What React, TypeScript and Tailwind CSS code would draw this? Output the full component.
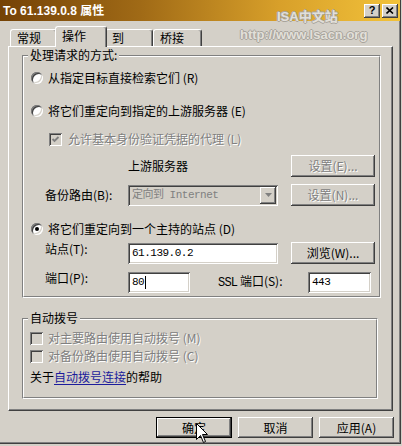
import React from "react";

const RAISED =
  "shadow-[inset_-1px_-1px_0_#404040,inset_1px_1px_0_#ffffff,inset_-2px_-2px_0_#808080,inset_2px_2px_0_#d4d0c8]";
const SUNKEN =
  "shadow-[inset_1px_1px_0_#808080,inset_-1px_-1px_0_#ffffff,inset_2px_2px_0_#404040,inset_-2px_-2px_0_#d4d0c8]";
const GRAY = "text-[#808080] [text-shadow:1px_1px_0_#ffffff]";
const MONO = "font-['Liberation_Mono','Noto_Sans_CJK_SC',monospace] text-[11px] tracking-[-0.5px]";

interface BtnProps {
  children: React.ReactNode;
  disabled?: boolean;
  primary?: boolean;
  size?: string;
}

const Btn: React.FC<BtnProps> = ({
  children,
  disabled = false,
  primary = false,
  size = "w-[84px] h-[22px]",
}) => (
  <div
    className={`flex shrink-0 items-center justify-center bg-[#d4d0c8] ${size} ${
      primary ? "border border-black" : ""
    } ${RAISED} ${disabled ? GRAY : "text-black"}`}
  >
    {children}
  </div>
);

const Radio: React.FC<{ checked?: boolean }> = ({ checked = false }) => (
  <span className="flex h-[12px] w-[12px] shrink-0 items-center justify-center rounded-full bg-white shadow-[inset_1px_1px_0_#808080,inset_-1px_-1px_0_#ffffff,inset_2px_2px_0_#404040,inset_-2px_-2px_0_#d4d0c8]">
    {checked && <span className="h-[4px] w-[4px] rounded-full bg-black" />}
  </span>
);

const Check: React.FC<{ checked?: boolean }> = ({ checked = false }) => (
  <span className={`flex h-[13px] w-[13px] shrink-0 items-center justify-center bg-[#d4d0c8] ${SUNKEN}`}>
    {checked && (
      <svg width="9" height="9" viewBox="0 0 9 9">
        <path d="M1.5 4 L3.5 6 L7.5 2" stroke="#808080" strokeWidth="1.8" fill="none" />
      </svg>
    )}
  </span>
);

interface GroupProps {
  title: string;
  size: string;
  children: React.ReactNode;
}

const Group: React.FC<GroupProps> = ({ title, size, children }) => (
  <div
    className={`relative shrink-0 border border-t-[#808080] border-l-[#808080] border-r-white border-b-white ${size}`}
  >
    <div className="flex h-full flex-col border border-t-white border-l-white border-r-[#808080] border-b-[#808080]">
      {children}
    </div>
    <span className="absolute left-[5px] top-[-8px] bg-[#d4d0c8] px-[2px] leading-[14px]">{title}</span>
  </div>
);

interface TabProps {
  label: string;
  size: string;
  active?: boolean;
}

const Tab: React.FC<TabProps> = ({ label, size, active = false }) => (
  <div
    className={`relative flex shrink-0 items-center rounded-t-[3px] border-l border-t border-r border-l-white border-t-white border-r-[#404040] bg-[#d4d0c8] pl-[6px] shadow-[inset_-1px_0_0_#808080] ${size} ${
      active ? "z-10 pb-[2px]" : "mb-[1px]"
    }`}
  >
    {label}
  </div>
);

const Field: React.FC<{ size: string; children?: React.ReactNode }> = ({ size, children }) => (
  <div className={`flex shrink-0 items-center bg-white pl-[4px] ${SUNKEN} ${size}`}>{children}</div>
);

const App: React.FC = () => {
  return (
    <div className="relative h-[446px] w-[402px] overflow-hidden bg-[#d4d0c8] font-['Noto_Sans_CJK_SC',sans-serif] text-[12px] leading-[14px] text-black">
      <div className="flex h-[444px] w-[401px] flex-col border-b border-r border-[#404040] shadow-[inset_-1px_-1px_0_#808080]">
        {/* title bar */}
        <div className="flex h-[21px] shrink-0 items-center bg-[linear-gradient(90deg,#744206_0%,#a06a16_35%,#d8a02a_70%,#f2c23a_100%)] pl-[3px] pr-[2px]">
          <span className="font-['Liberation_Sans','Noto_Sans_CJK_SC',sans-serif] text-[12px] font-bold text-white">
            To 61.139.0.8 属性
          </span>
          <div className="ml-auto flex gap-[2px]">
            <div className={`flex h-[14px] w-[16px] items-center justify-center bg-[#d4d0c8] ${RAISED}`}>
              <span className="font-['Liberation_Sans',sans-serif] text-[11px] font-bold leading-none">?</span>
            </div>
            <div className={`flex h-[14px] w-[16px] items-center justify-center bg-[#d4d0c8] ${RAISED}`}>
              <svg width="8" height="7" viewBox="0 0 8 7">
                <path d="M0.5 0.5 L7 6.5 M7 0.5 L0.5 6.5" stroke="#000" strokeWidth="1.6" />
              </svg>
            </div>
          </div>
        </div>

        {/* tabs */}
        <div className="relative z-10 mt-[5px] flex h-[21px] shrink-0 items-end pl-[10px]">
          <Tab label="常规" size="w-[47px] h-[17px]" />
          <Tab label="操作" size="w-[52px] h-[21px] -mx-[2px]" active />
          <Tab label="到" size="w-[48px] h-[17px]" />
          <Tab label="桥接" size="w-[49px] h-[17px]" />
        </div>

        {/* tab panel */}
        <div className="relative -mt-[1px] ml-[8px] flex h-[365px] w-[385px] shrink-0 flex-col border border-l-white border-t-white border-r-[#404040] border-b-[#404040] pl-[13px] pt-[8px] shadow-[inset_-1px_-1px_0_#808080]">
          <Group title="处理请求的方式:" size="w-[359px] h-[243px]">
            <div className="mt-[13px] flex h-[16px] items-center pl-[7px]">
              <Radio />
              <span className="ml-[5px]">从指定目标直接检索它们 (R)</span>
            </div>
            <div className="mt-[17px] flex h-[16px] items-center pl-[7px]">
              <Radio />
              <span className="ml-[5px]">将它们重定向到指定的上游服务器 (E)</span>
            </div>
            <div className="mt-[12px] flex h-[16px] items-center pl-[25px]">
              <Check checked />
              <span className={`ml-[6px] ${GRAY}`}>允许基本身份验证凭据的代理 (L)</span>
            </div>
            <div className="mt-[8px] flex h-[22px] items-center pl-[104px]">
              <span className="w-[150px]">上游服务器</span>
              <div className="ml-[13px]">
                <Btn disabled>设置(E)...</Btn>
              </div>
            </div>
            <div className="mt-[7px] flex h-[22px] items-center pl-[21px]">
              <span className="w-[83px]">备份路由(B):</span>
              <div className={`flex h-[21px] w-[150px] shrink-0 items-center bg-[#d4d0c8] pl-[4px] pr-[2px] ${SUNKEN}`}>
                <span className={`${MONO} text-[#808080]`}>定向到 Internet</span>
                <span className={`ml-auto flex h-[17px] w-[16px] items-center justify-center bg-[#d4d0c8] ${RAISED}`}>
                  <svg width="7" height="4" viewBox="0 0 7 4">
                    <path d="M0 0 H7 L3.5 4 Z" fill="#808080" />
                  </svg>
                </span>
              </div>
              <div className="ml-[13px]">
                <Btn disabled>设置(N)...</Btn>
              </div>
            </div>
            <div className="mt-[15px] flex h-[16px] items-center pl-[7px]">
              <Radio checked />
              <span className="ml-[5px]">将它们重定向到一个主持的站点 (D)</span>
            </div>
            <div className="mt-[5px] flex h-[22px] items-center pl-[21px]">
              <span className="w-[83px] self-start">站点(T):</span>
              <Field size="w-[150px] h-[21px]">
                <span className={MONO}>61.139.0.2</span>
              </Field>
              <div className="ml-[13px]">
                <Btn>浏览(W)...</Btn>
              </div>
            </div>
            <div className="mt-[7px] flex h-[22px] items-center pl-[21px]">
              <span className="w-[83px] self-start">端口(P):</span>
              <Field size="w-[62px] h-[21px]">
                <span className={MONO}>80</span>
                <span className="ml-[1px] h-[13px] w-[1px] bg-black" />
              </Field>
              <span className="ml-[28px] w-[90px]">
                <span className="font-['Liberation_Mono',monospace] text-[12px] tracking-[-0.8px]">SSL</span> 端口(S):
              </span>
              <Field size="w-[63px] h-[21px]">
                <span className={MONO}>443</span>
              </Field>
            </div>
          </Group>

          <div className="mt-[20px]">
            <Group title="自动拨号" size="w-[356px] h-[81px]">
              <div className="mt-[10px] flex h-[16px] items-center pl-[6px]">
                <Check />
                <span className={`ml-[5px] ${GRAY}`}>对主要路由使用自动拨号 (M)</span>
              </div>
              <div className="mt-[2px] flex h-[16px] items-center pl-[6px]">
                <Check />
                <span className={`ml-[5px] ${GRAY}`}>对备份路由使用自动拨号 (C)</span>
              </div>
              <div className="mt-[5px] flex h-[16px] items-center pl-[6px]">
                <span>
                  关于<span className="text-[#1c1c9c] underline underline-offset-2">自动拨号连接</span>的帮助
                </span>
              </div>
            </Group>
          </div>
        </div>

        {/* dialog buttons */}
        <div className="mt-[6px] flex shrink-0 justify-end gap-[6px] pr-[6px]">
          <Btn primary size="w-[76px] h-[21px]">
            确定
          </Btn>
          <Btn size="w-[75px] h-[21px]">取消</Btn>
          <Btn size="w-[75px] h-[21px]">应用(A)</Btn>
        </div>
      </div>

      {/* watermark */}
      <div className="pointer-events-none absolute left-[240px] top-[8px] z-20 flex flex-col items-start font-['Liberation_Sans','Noto_Sans_CJK_SC',sans-serif] font-bold leading-[18px] text-[#ebe8e2]/90 [text-shadow:1px_0_0_#a8a49c,-1px_0_0_#a8a49c,0_1px_0_#a8a49c,0_-1px_0_#a8a49c]">
        <span className="ml-[37px] text-[13px]">ISA中文站</span>
        <span className="text-[13px]">http://www.lsacn.org</span>
      </div>

      {/* mouse pointer */}
      <svg
        className="pointer-events-none absolute left-[196px] top-[423px] z-30"
        width="13"
        height="22"
        viewBox="0 0 13 22"
      >
        <path
          d="M0.5 0.5 L0.5 16.5 L4.5 12.5 L7.5 19.5 L9.5 18.5 L6.5 11.5 L11.5 11.5 Z"
          fill="#ffffff"
          stroke="#000000"
          strokeWidth="1"
        />
      </svg>
    </div>
  );
};

export default App;
